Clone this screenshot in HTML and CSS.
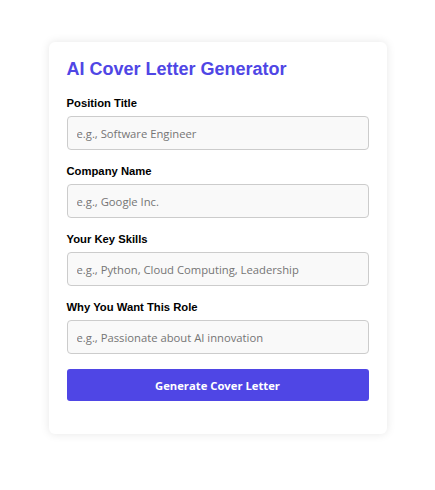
FILE: index.html
```html
<!DOCTYPE html>
<html lang="en">
<head>
  <meta charset="UTF-8" />
  <meta name="viewport" content="width=device-width, initial-scale=1.0" />
  <title>AI Cover Letter Generator</title>
  <link rel="stylesheet" href="styles.css">
</head>
<body>
  <div class="container">
    <h2>AI Cover Letter Generator</h2>

    <div class="form-group">
      <label for="position">Position Title</label>
      <input type="text" id="position" placeholder="e.g., Software Engineer">
    </div>

    <div class="form-group">
      <label for="company">Company Name</label>
      <input type="text" id="company" placeholder="e.g., Google Inc.">
    </div>

    <div class="form-group">
      <label for="skills">Your Key Skills</label>
      <input type="text" id="skills" placeholder="e.g., Python, Cloud Computing, Leadership">
    </div>

    <div class="form-group">
      <label for="motivation">Why You Want This Role</label>
      <input type="text" id="motivation" placeholder="e.g., Passionate about AI innovation">
    </div>

    <button id="generate">Generate Cover Letter</button>
  </div>
</body>
</html>
```

FILE: styles.css
```css
* {
  box-sizing: border-box;
}

body {
  margin: 0;
  background: #ffffff;
  font-family: 'Liberation Sans', Arial, sans-serif;
}

.container {
  width: 338px;
  margin: 42px auto;
  padding: 17px 18px 33px;
  background: #ffffff;
  border-radius: 6px;
  box-shadow: 0 0 10px rgba(0, 0, 0, 0.1);
}

h2 {
  margin: 0 0 17px;
  font-size: 18px;
  color: #4f46e5;
}

.form-group {
  margin-bottom: 15px;
}

label {
  display: block;
  margin-bottom: 7px;
  font-size: 11.25px;
  font-weight: bold;
  color: #000000;
}

input {
  display: block;
  width: 100%;
  height: 34.1px;
  padding: 0 9px;
  font-family: 'Open Sans', sans-serif;
  font-size: 11.25px;
  background: #f9f9f9;
  border: 1px solid #cccccc;
  border-radius: 4px;
}

button {
  display: block;
  width: 100%;
  height: 32px;
  border: none;
  border-radius: 3px;
  background: #4f46e5;
  color: #ffffff;
  font-family: 'Open Sans', sans-serif;
  font-size: 11.25px;
  font-weight: bold;
  cursor: pointer;
}
```
